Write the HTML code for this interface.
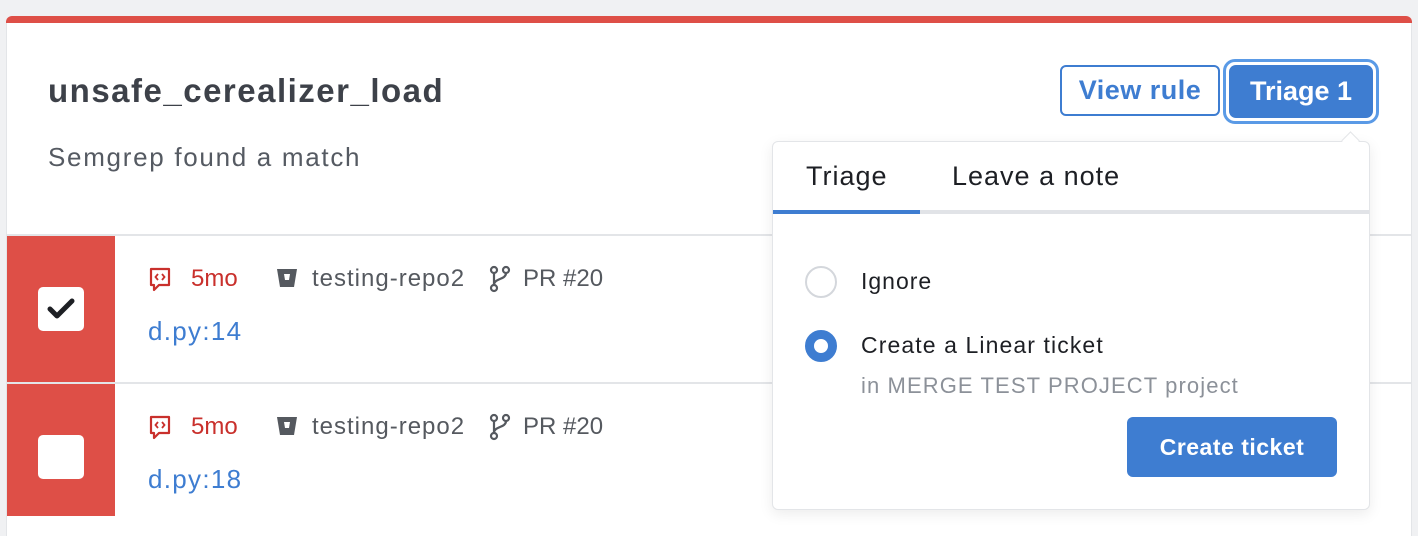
<!DOCTYPE html>
<html><head><style>
*{box-sizing:border-box;margin:0;padding:0}
body{width:1418px;height:516px;background:#f0f1f3;font-family:"Liberation Sans",sans-serif;position:relative;overflow:hidden}
.a{position:absolute;white-space:nowrap;letter-spacing:1px}
</style></head><body>
<div class="a" style="left:6px;top:16px;width:1406px;height:520px;background:#fff;border-radius:6px 6px 0 0;border-left:1px solid #e3e5e8;border-right:1px solid #e3e5e8"></div>
<div class="a" style="left:6px;top:16px;width:1406px;height:7px;background:#de4f47;border-radius:6px 6px 0 0"></div>
<div class="a" style="left:48px;top:72px;font-size:33px;font-weight:bold;color:#3d4149;letter-spacing:1.5px">unsafe_cerealizer_load</div>
<div class="a" style="left:48px;top:142px;font-size:26px;color:#555a62;letter-spacing:1.7px">Semgrep found a match</div>
<div class="a" style="left:1060px;top:65px;width:160px;height:51px;border:2px solid #3e7dd1;border-radius:6px;color:#3e7dd1;font-size:27px;font-weight:bold;text-align:center;line-height:47px;letter-spacing:0.5px">View rule</div>
<div class="a" style="left:1223px;top:59px;width:156px;height:65px;border:3px solid #5a9ae6;border-radius:12px"></div>
<div class="a" style="left:1229px;top:65px;width:144px;height:53px;background:#3e7dd1;border-radius:7px;color:#fff;font-size:27px;font-weight:bold;text-align:center;line-height:53px;letter-spacing:0">Triage 1</div>
<div class="a" style="left:7px;top:234px;width:1404px;height:2px;background:#e3e5e8"></div>
<div class="a" style="left:7px;top:382px;width:1404px;height:2px;background:#e3e5e8"></div>
<div class="a" style="left:7px;top:236px;width:108px;height:146px;background:#de4f47"></div>
<div class="a" style="left:7px;top:384px;width:108px;height:132px;background:#de4f47"></div>
<div class="a" style="left:38px;top:287px;width:46px;height:44px;background:#fff;border-radius:5px"></div>
<svg class="a" style="left:46px;top:297px" width="30" height="24" viewBox="0 0 30 24"><path d="M4 12l7 7L26 4" stroke="#1d1f24" stroke-width="5" fill="none" stroke-linecap="round" stroke-linejoin="round"/></svg>
<div class="a" style="left:38px;top:435px;width:46px;height:44px;background:#fff;border-radius:5px"></div>
<!-- row meta -->
<div class="a" style="left:148px;top:262px;width:480px;height:110px">
 <svg class="a" style="left:0;top:5px" width="24" height="26" viewBox="0 0 24 26"><path d="M3 2h18v16H11l-5 5v-5H3z" stroke="#c9302c" stroke-width="2.2" fill="none" stroke-linejoin="round"/><path d="M10 7l-2.5 3 2.5 3M14 7l2.5 3-2.5 3" stroke="#c9302c" stroke-width="1.8" fill="none"/></svg>
 <div class="a" style="left:43px;top:3px;font-size:24px;color:#c9302c;letter-spacing:0">5mo</div>
 <svg class="a" style="left:128px;top:6px" width="22" height="20" viewBox="0 0 22 20"><path d="M1 1h20l-3 18H4z" fill="#55595f"/><path d="M8 6h6l-1 6H9z" fill="#fff"/></svg>
 <div class="a" style="left:164px;top:3px;font-size:24px;color:#55595f">testing-repo2</div>
 <svg class="a" style="left:341px;top:3px" width="22" height="28" viewBox="0 0 22 28"><circle cx="5" cy="5" r="3" stroke="#55595f" stroke-width="2.2" fill="none"/><circle cx="5" cy="23" r="3" stroke="#55595f" stroke-width="2.2" fill="none"/><circle cx="17" cy="5" r="3" stroke="#55595f" stroke-width="2.2" fill="none"/><path d="M5 8v12M17 8c0 7-12 5-12 12" stroke="#55595f" stroke-width="2.2" fill="none"/></svg>
 <div class="a" style="left:375px;top:3px;font-size:24px;color:#55595f;letter-spacing:0">PR #20</div>
 <div class="a" style="left:0;top:54px;font-size:26px;color:#3e7dd1;letter-spacing:1.3px">d.py:14</div>
</div>
<div class="a" style="left:148px;top:410px;width:480px;height:110px">
 <svg class="a" style="left:0;top:5px" width="24" height="26" viewBox="0 0 24 26"><path d="M3 2h18v16H11l-5 5v-5H3z" stroke="#c9302c" stroke-width="2.2" fill="none" stroke-linejoin="round"/><path d="M10 7l-2.5 3 2.5 3M14 7l2.5 3-2.5 3" stroke="#c9302c" stroke-width="1.8" fill="none"/></svg>
 <div class="a" style="left:43px;top:3px;font-size:24px;color:#c9302c;letter-spacing:0">5mo</div>
 <svg class="a" style="left:128px;top:6px" width="22" height="20" viewBox="0 0 22 20"><path d="M1 1h20l-3 18H4z" fill="#55595f"/><path d="M8 6h6l-1 6H9z" fill="#fff"/></svg>
 <div class="a" style="left:164px;top:3px;font-size:24px;color:#55595f">testing-repo2</div>
 <svg class="a" style="left:341px;top:3px" width="22" height="28" viewBox="0 0 22 28"><circle cx="5" cy="5" r="3" stroke="#55595f" stroke-width="2.2" fill="none"/><circle cx="5" cy="23" r="3" stroke="#55595f" stroke-width="2.2" fill="none"/><circle cx="17" cy="5" r="3" stroke="#55595f" stroke-width="2.2" fill="none"/><path d="M5 8v12M17 8c0 7-12 5-12 12" stroke="#55595f" stroke-width="2.2" fill="none"/></svg>
 <div class="a" style="left:375px;top:3px;font-size:24px;color:#55595f;letter-spacing:0">PR #20</div>
 <div class="a" style="left:0;top:54px;font-size:26px;color:#3e7dd1;letter-spacing:1.3px">d.py:18</div>
</div>
<!-- popover -->
<div class="a" style="left:772px;top:141px;width:598px;height:369px;background:#fff;border:1px solid #e3e5e8;border-radius:6px;box-shadow:0 4px 14px rgba(0,0,0,.08)"></div>
<div class="a" style="left:1344px;top:134px;width:13px;height:13px;background:#fff;border-left:1px solid #e3e5e8;border-top:1px solid #e3e5e8;transform:rotate(45deg)"></div>
<div class="a" style="left:773px;top:210px;width:596px;height:4px;background:#e1e3e7"></div>
<div class="a" style="left:773px;top:210px;width:147px;height:4px;background:#3e7dd1"></div>
<div class="a" style="left:806px;top:161px;font-size:27px;color:#1d1f24">Triage</div>
<div class="a" style="left:952px;top:161px;font-size:27px;color:#1d1f24">Leave a note</div>
<div class="a" style="left:805px;top:266px;width:32px;height:32px;border:2px solid #d4d7dc;border-radius:50%"></div>
<div class="a" style="left:861px;top:268px;font-size:23px;color:#1d1f24">Ignore</div>
<div class="a" style="left:805px;top:330px;width:32px;height:32px;border:9px solid #3e7dd1;border-radius:50%;background:#fff"></div>
<div class="a" style="left:861px;top:332px;font-size:23px;color:#1d1f24;letter-spacing:1.1px">Create a Linear ticket</div>
<div class="a" style="left:861px;top:373px;font-size:22px;color:#8c9199;letter-spacing:1.1px">in MERGE TEST PROJECT project</div>
<div class="a" style="left:1127px;top:417px;width:210px;height:60px;background:#3e7dd1;border-radius:6px;color:#fff;font-size:23px;font-weight:bold;text-align:center;line-height:60px;letter-spacing:0.5px">Create ticket</div>
</body></html>
